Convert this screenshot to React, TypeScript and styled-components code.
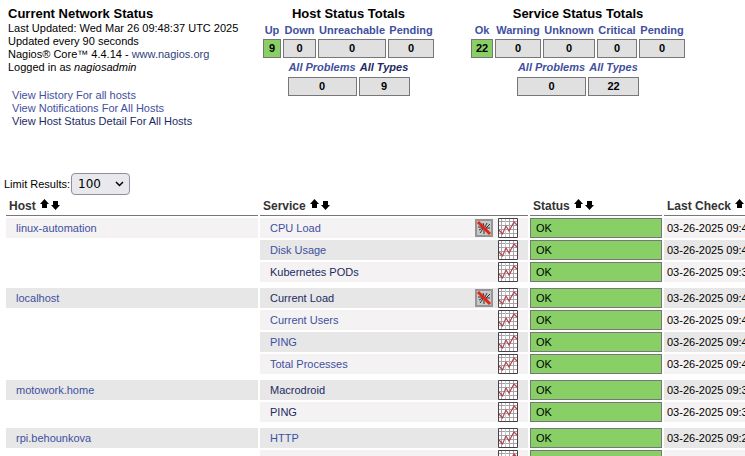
import React from "react";
import styled, { createGlobalStyle } from "styled-components";

const GlobalStyle = createGlobalStyle`
  body {
    margin: 0;
    background: #fff;
    color: #000;
    font: 12px/13px "Liberation Sans", Arial, sans-serif;
  }
`;

const Page = styled.main`
  height: 100vh;
  overflow: hidden;
`;

const Header = styled.header`
  display: grid;
  grid-template-columns: 253px 208px 1fr;
  align-items: start;
  height: 162px;
  padding: 6px 0 0 8px;
  white-space: nowrap;
`;

const InfoTitle = styled.h1`
  margin: 0;
  font-size: 13px;
  line-height: 16px;
`;

const InfoLine = styled.div`
  font-size: 11px;
`;

const linkColors = { fresh: "#3f4fa0", site: "#2f3f7c", visited: "#1c2a63" };

const Link = styled.a<{ $tone?: keyof typeof linkColors }>`
  color: ${(p) => linkColors[p.$tone ?? "fresh"]};
  text-decoration: none;
`;

const LinkList = styled.nav`
  display: flex;
  flex-direction: column;
  padding: 15px 0 0 4px;
  font-size: 11px;
`;

const Totals = styled.section`
  display: flex;
  flex-direction: column;
  align-items: center;
  justify-self: start;
`;

const TotalsTitle = styled.h2`
  margin: 0;
  font-size: 13px;
  line-height: 16px;
`;

const TotalsTable = styled.table<{ $italic?: boolean }>`
  table-layout: fixed;
  border-spacing: 2px 0;
  font-size: 11px;
  font-weight: bold;
  text-align: center;

  th {
    height: ${(p) => (p.$italic ? 19 : 17)}px;
    padding: 0;
    line-height: 17px;
    font-style: ${(p) => (p.$italic ? "italic" : "normal")};
  }
`;

const Count = styled.td<{ $ok?: boolean }>`
  box-sizing: border-box;
  height: 19px;
  padding: 0;
  border: 1px solid #777;
  background: ${(p) => (p.$ok ? "#88d066" : "#e0e0e0")};
`;

const Col = styled.col<{ $width: number }>`
  width: ${(p) => p.$width}px;
`;

const Limit = styled.form`
  display: flex;
  align-items: center;
  gap: 1px;
  padding: 5px 0 0 4px;
  font-size: 11px;
`;

const LimitSelectBox = styled.div`
  position: relative;
  display: flex;
`;

const LimitSelect = styled.select`
  appearance: none;
  width: 59px;
  height: 22px;
  padding: 0 6px;
  border: 1px solid #8f8f9d;
  border-radius: 4px;
  background: #e9e9ed;
  color: #000;
  font: 12px "DejaVu Sans", sans-serif;
`;

const Chevron = styled.svg`
  position: absolute;
  right: 6px;
  top: 8px;
  pointer-events: none;
`;

const StatusTable = styled.table`
  table-layout: fixed;
  width: calc(100% - 2px);
  margin-left: 4px;
  border-spacing: 2px;
  white-space: nowrap;
`;

const Heading = styled.th`
  height: 18px;
  padding: 0 3px;
  border-bottom: 1px solid #777;
  color: #333;
  text-align: left;
`;

const HeadingContent = styled.div`
  display: flex;
  align-items: center;
  gap: 4px;
`;

const Arrows = styled.svg`
  flex: none;
  margin-bottom: 4px;
`;

const Cell = styled.td<{ $shade?: "odd" | "even"; $pad: number }>`
  box-sizing: border-box;
  height: 20px;
  padding: 0 ${(p) => p.$pad}px;
  font-size: 11px;
  background: ${(p) =>
    p.$shade === "odd" ? "#e7e7e7" : p.$shade === "even" ? "#f4f2f2" : "transparent"};
`;

const StatusCell = styled(Cell)`
  border: 1px solid #777;
  background: #88d066;
`;

const SpacerCell = styled.td`
  height: 2px;
  padding: 0;
`;

const ServiceContent = styled.div`
  display: flex;
  align-items: center;
  justify-content: space-between;
`;

const Icons = styled.span`
  display: flex;
  align-items: center;
  gap: 5px;
  margin-left: auto;
`;

const GraphIcon = () => (
  <svg width="20" height="20" viewBox="0 0 20 20" role="img" aria-label="Service graph">
    <rect width="20" height="20" fill="#fff" />
    <path
      d="M3.5 1v18M11.5 1v18M15.5 1v18M1 3.5h18M1 7.5h18M1 11.5h18M1 15.5h18"
      stroke="#aaa2a6"
      fill="none"
      shapeRendering="crispEdges"
    />
    <path d="M7.5 1v18" stroke="#b8d0c4" />
    <path d="M1 12l3.500 4L8 8l3 5L16 4l3 3" fill="none" stroke="#b04450" strokeWidth="1.200" />
    <path d="M.5.5h19v19H.5z" fill="none" stroke="#484044" />
  </svg>
);

const MutedIcon = () => (
  <svg width="18" height="18" viewBox="0 0 18 18" role="img" aria-label="Notifications disabled">
    <path d="M1 1h16v16H1z" fill="#c8c8c8" stroke="#959595" strokeWidth="2" />
    <path
      d="M8 4l1 3M12 4l-2 4M15 5l-4 4M3 8h4M4 11l4-2M5 14l3-4M9 15V11M15 9h-4"
      fill="none"
      stroke="#333"
    />
    <path d="M3 3l12 12" stroke="#e62414" strokeWidth="3" />
  </svg>
);

const SortArrows = () => (
  <Arrows width="20" height="11" viewBox="0 0 20 11" role="img" aria-label="Sort">
    <path d="M4.500 0L9 5H7v4H2V5H0zM13 2h5v4h2l-4.500 5L11 6h2z" fill="#000" />
  </Arrows>
);

type Total = { label: string; value: number; width: number; ok?: boolean; visited?: boolean };

const hostTotals: Total[] = [
  { label: "Up", value: 9, width: 18, ok: true },
  { label: "Down", value: 0, width: 33 },
  { label: "Unreachable", value: 0, width: 68 },
  { label: "Pending", value: 0, width: 46 },
];
const hostSums: Total[] = [
  { label: "All Problems", value: 0, width: 69 },
  { label: "All Types", value: 9, width: 51, visited: true },
];
const serviceTotals: Total[] = [
  { label: "Ok", value: 22, width: 22, ok: true },
  { label: "Warning", value: 0, width: 46 },
  { label: "Unknown", value: 0, width: 52 },
  { label: "Critical", value: 0, width: 40 },
  { label: "Pending", value: 0, width: 46 },
];
const serviceSums: Total[] = [
  { label: "All Problems", value: 0, width: 69 },
  { label: "All Types", value: 22, width: 51 },
];

const toneOf = (visited?: boolean) => (visited ? "visited" : "fresh");

const TotalsGrid = ({ items, italic }: { items: Total[]; italic?: boolean }) => (
  <TotalsTable $italic={italic}>
    <colgroup>
      {items.map((t) => (
        <Col key={t.label} $width={t.width} />
      ))}
    </colgroup>
    <thead>
      <tr>
        {items.map((t) => (
          <th key={t.label} scope="col">
            <Link href="#" $tone={toneOf(t.visited)}>{t.label}</Link>
          </th>
        ))}
      </tr>
    </thead>
    <tbody>
      <tr>
        {items.map((t) => (
          <Count key={t.label} $ok={t.ok}>{t.value}</Count>
        ))}
      </tr>
    </tbody>
  </TotalsTable>
);

type Service = { name: string; checked: string; muted?: boolean; visited?: boolean };
type Host = { name: string; shade: "odd" | "even"; services: Service[] };

const hosts: Host[] = [
  {
    name: "linux-automation",
    shade: "even",
    services: [
      { name: "CPU Load", checked: "03-26-2025 09:4", muted: true },
      { name: "Disk Usage", checked: "03-26-2025 09:4" },
      { name: "Kubernetes PODs", checked: "03-26-2025 09:3", visited: true },
    ],
  },
  {
    name: "localhost",
    shade: "odd",
    services: [
      { name: "Current Load", checked: "03-26-2025 09:4", muted: true, visited: true },
      { name: "Current Users", checked: "03-26-2025 09:4" },
      { name: "PING", checked: "03-26-2025 09:4" },
      { name: "Total Processes", checked: "03-26-2025 09:4" },
    ],
  },
  {
    name: "motowork.home",
    shade: "odd",
    services: [
      { name: "Macrodroid", checked: "03-26-2025 09:3", visited: true },
      { name: "PING", checked: "03-26-2025 09:3", visited: true },
    ],
  },
  {
    name: "rpi.behounkova",
    shade: "odd",
    services: [
      { name: "HTTP", checked: "03-26-2025 09:2" },
      { name: "", checked: "" },
    ],
  },
];

const shadeOf = (host: Host, i: number) =>
  (i % 2 === 0) === (host.shade === "odd") ? "odd" : "even";

export default function App() {
  return (
    <Page>
      <GlobalStyle />
      <Header>
        <section>
          <InfoTitle>Current Network Status</InfoTitle>
          <InfoLine>Last Updated: Wed Mar 26 09:48:37 UTC 2025</InfoLine>
          <InfoLine>Updated every 90 seconds</InfoLine>
          <InfoLine>
            Nagios® Core™ 4.4.14 - <Link href="#" $tone="site">www.nagios.org</Link>
          </InfoLine>
          <InfoLine>
            Logged in as <i>nagiosadmin</i>
          </InfoLine>
          <LinkList>
            <Link href="#">View History For all hosts</Link>
            <Link href="#">View Notifications For All Hosts</Link>
            <Link href="#" $tone="visited">View Host Status Detail For All Hosts</Link>
          </LinkList>
        </section>
        <Totals>
          <TotalsTitle>Host Status Totals</TotalsTitle>
          <TotalsGrid items={hostTotals} />
          <TotalsGrid items={hostSums} italic />
        </Totals>
        <Totals>
          <TotalsTitle>Service Status Totals</TotalsTitle>
          <TotalsGrid items={serviceTotals} />
          <TotalsGrid items={serviceSums} italic />
        </Totals>
      </Header>
      <Limit>
        <label htmlFor="limit">Limit Results:</label>
        <LimitSelectBox>
          <LimitSelect id="limit" defaultValue="100">
            <option>100</option>
          </LimitSelect>
          <Chevron width="9" height="6" viewBox="0 0 9 6" aria-hidden="true">
            <path d="M1 1l3.500 3.500L8 1" fill="none" stroke="#000" strokeWidth="1.500" />
          </Chevron>
        </LimitSelectBox>
      </Limit>
      <StatusTable>
        <colgroup>
          <Col $width={252} />
          <Col $width={268} />
          <Col $width={132} />
          <col />
        </colgroup>
        <thead>
          <tr>
            {["Host", "Service", "Status", "Last Check"].map((h) => (
              <Heading key={h} scope="col">
                <HeadingContent>
                  {h}
                  <SortArrows />
                </HeadingContent>
              </Heading>
            ))}
          </tr>
        </thead>
        <tbody>
          {hosts.map((host, h) => (
            <React.Fragment key={host.name}>
              {h > 0 && (
                <tr>
                  <SpacerCell colSpan={4} />
                </tr>
              )}
              {host.services.map((s, i) => (
                <tr key={s.name}>
                  <Cell $pad={10} $shade={i === 0 ? host.shade : undefined}>
                    {i === 0 && <Link href="#">{host.name}</Link>}
                  </Cell>
                  <Cell $pad={10} $shade={shadeOf(host, i)}>
                    <ServiceContent>
                      {s.name && <Link href="#" $tone={toneOf(s.visited)}>{s.name}</Link>}
                      <Icons>
                        {s.muted && <MutedIcon />}
                        <GraphIcon />
                      </Icons>
                    </ServiceContent>
                  </Cell>
                  <StatusCell $pad={5}>{s.name && "OK"}</StatusCell>
                  <Cell $pad={3} $shade={shadeOf(host, i)}>{s.checked}</Cell>
                </tr>
              ))}
            </React.Fragment>
          ))}
        </tbody>
      </StatusTable>
    </Page>
  );
}
